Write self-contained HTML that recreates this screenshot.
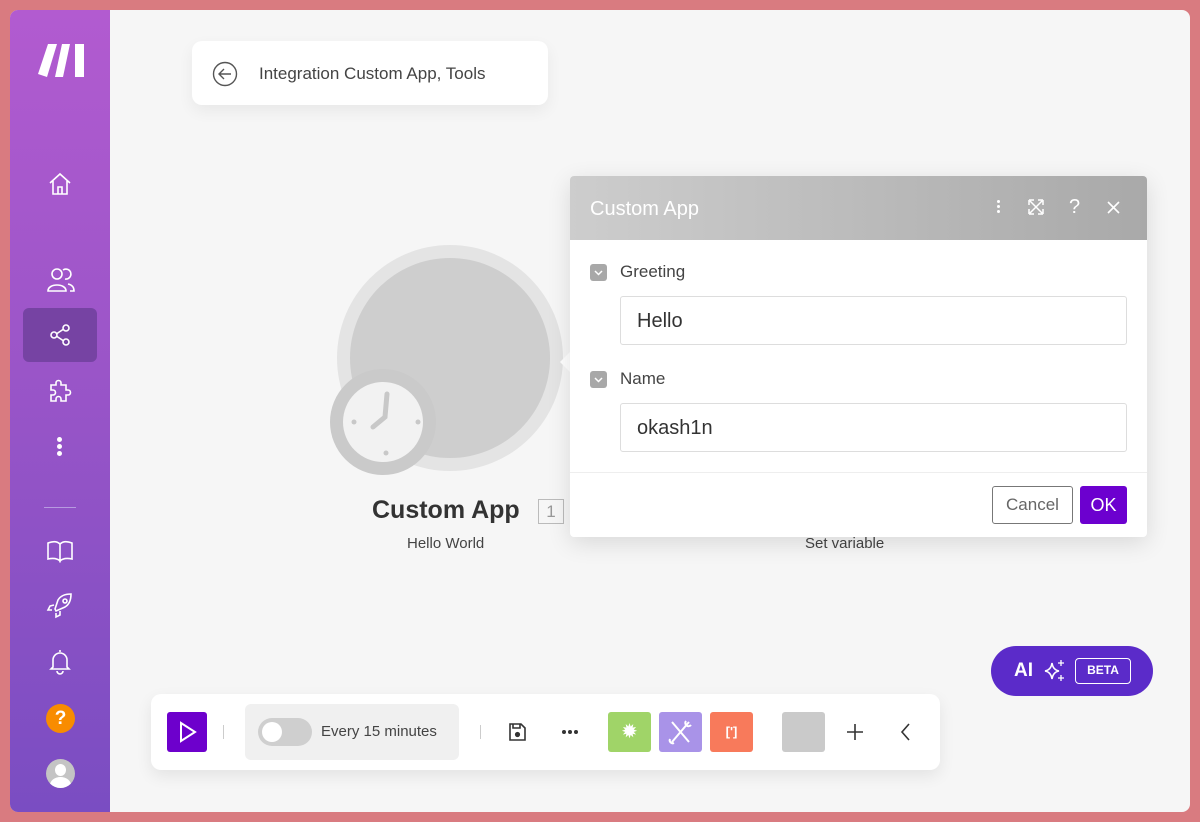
<!DOCTYPE html>
<html><head><meta charset="utf-8"><style>
*{margin:0;padding:0;box-sizing:border-box}
body{width:1200px;height:822px;background:#d97b80;font-family:"Liberation Sans",sans-serif;position:relative;overflow:hidden}
.frame{position:absolute;left:10px;top:10px;width:1180px;height:802px;background:#f6f6f6;border-radius:8px;overflow:hidden}
.side{position:absolute;left:0;top:0;width:100px;height:802px;background:linear-gradient(180deg,#b25bd0 0%,#9a55c8 45%,#7a4dc2 100%)}
.abs{position:absolute}
.ic{position:absolute;left:36px}
</style></head><body>
<div class="frame">
 <div class="side">
  <svg class="abs" style="left:28px;top:32px" width="48" height="36" viewBox="0 0 48 36"><g fill="#fff"><polygon points="10,2 19,2 9,35 0,32"/><polygon points="24,2 32,2 25,35 17,35"/><polygon points="37,2 46,2 46,35 37,35"/></g></svg>
  <svg class="ic" style="top:160px" width="28" height="28" viewBox="0 0 28 28" fill="none" stroke="#fff" stroke-width="1.6"><path d="M4 13 L14 4 L24 13 M7 11 V24 H21 V11 M12 24 V17 H16 V24"/></svg>
  <svg class="ic" style="top:256px" width="30" height="28" viewBox="0 0 30 28" fill="none" stroke="#fff" stroke-width="1.6"><circle cx="11" cy="8" r="5"/><path d="M2 25 C2 17 20 17 20 25 Z"/><path d="M17 4 A5 5 0 1 1 19 13 M22 18 C27 19 28 22 28 25 H24"/></svg>
  <div class="abs" style="left:13px;top:298px;width:74px;height:54px;background:#7643a3;border-radius:6px"></div>
  <svg class="ic" style="top:311px" width="28" height="28" viewBox="0 0 28 28" fill="none" stroke="#fff" stroke-width="1.6"><circle cx="20" cy="7" r="3"/><circle cx="8" cy="14" r="3"/><circle cx="20" cy="21" r="3"/><path d="M11 12.5 L17 8.5 M11 15.5 L17 19.5"/></svg>
  <svg class="ic" style="top:367px" width="28" height="28" viewBox="0 0 28 28" fill="none" stroke="#fff" stroke-width="1.6"><path d="M5 8 H10 V6 A2.5 2.5 0 0 1 15 6 V8 H20 V13 H22 A2.5 2.5 0 0 1 22 18 H20 V24 H15 V22 A2.5 2.5 0 0 0 10 22 V24 H5 V18 H7 A2.5 2.5 0 0 0 7 13 H5 Z"/></svg>
  <div class="abs" style="left:47px;top:427px;width:5px;height:5px;border-radius:50%;background:#fff;box-shadow:0 7px 0 #fff,0 14px 0 #fff"></div>
  <div class="abs" style="left:34px;top:497px;width:32px;height:1px;background:#b79ae0"></div>
  <svg class="ic" style="top:527px" width="30" height="28" viewBox="0 0 30 28" fill="none" stroke="#fff" stroke-width="1.6"><path d="M2 6 C7 4 11 4 14 7 V24 C11 21 7 21 2 22 Z M26 6 C21 4 17 4 14 7 V24 C17 21 21 21 26 22 Z"/></svg>
  <svg class="ic" style="top:582px" width="28" height="28" viewBox="0 0 28 28" fill="none" stroke="#fff" stroke-width="1.6"><path d="M9 17 L12 8 C15 3 20 2 25 2 C25 7 24 12 19 15 L10 19 Z"/><circle cx="19" cy="9" r="2"/><path d="M8 13 L4 14 L2 18 L6 18 M14 19 L14 23 L10 25 L10 21"/></svg>
  <svg class="ic" style="top:637px" width="28" height="28" viewBox="0 0 28 28" fill="none" stroke="#fff" stroke-width="1.6"><path d="M14 3 V5 M7 20 V13 A7 7 0 0 1 21 13 V20 L23 22 H5 Z M11 24 A3 3 0 0 0 17 24"/></svg>
  <div class="abs" style="left:36px;top:694px;width:29px;height:29px;border-radius:50%;background:#f88c00;color:#fff;font-weight:bold;font-size:19px;text-align:center;line-height:29px">?</div>
  <div class="abs" style="left:36px;top:749px;width:29px;height:29px;border-radius:50%;background:#c4c4c4;overflow:hidden"><div class="abs" style="left:9px;top:5px;width:11px;height:12px;border-radius:50%;background:#fff"></div><div class="abs" style="left:4px;top:18px;width:21px;height:16px;border-radius:50%;background:#fff"></div></div>
 </div>

 <div class="abs" style="left:182px;top:31px;width:356px;height:64px;background:#fff;border-radius:10px;box-shadow:0 6px 16px rgba(0,0,0,.06)">
  <svg class="abs" style="left:19px;top:19px" width="28" height="28" viewBox="0 0 28 28" fill="none" stroke="#555" stroke-width="1.4"><circle cx="14" cy="14" r="11.5"/><path d="M20 14 H8 M13 9 L8 14 L13 19"/></svg>
  <div class="abs" style="left:67px;top:23px;font-size:17px;color:#444">Integration Custom App, Tools</div>
 </div>

 <div class="abs" style="left:327px;top:235px;width:226px;height:226px;border-radius:50%;background:#e4e4e4"></div>
 <div class="abs" style="left:340px;top:248px;width:200px;height:200px;border-radius:50%;background:#cecece"></div>
 <div class="abs" style="left:320px;top:359px;width:106px;height:106px;border-radius:50%;background:#cacaca"></div>
 <div class="abs" style="left:333px;top:372px;width:80px;height:80px;border-radius:50%;background:#f2f2f2"></div>
 <svg class="abs" style="left:333px;top:372px" width="80" height="80" viewBox="0 0 80 80"><g fill="#c8c8c8"><circle cx="11" cy="40" r="2.5"/><circle cx="75" cy="40" r="2.5"/><circle cx="43" cy="71" r="2.5"/></g><path d="M44 12 L42 35 L30 45" stroke="#c8c8c8" stroke-width="5" fill="none" stroke-linecap="round"/></svg>
 <div class="abs" style="left:362px;top:486px;font-size:25px;font-weight:bold;color:#333">Custom App</div>
 <div class="abs" style="left:528px;top:489px;width:26px;height:25px;border:1px solid #bbb;color:#999;font-size:17px;text-align:center;line-height:23px">1</div>
 <div class="abs" style="left:397px;top:525px;font-size:15px;color:#444">Hello World</div>
 <div class="abs" style="left:795px;top:525px;font-size:15px;color:#444">Set variable</div>

 <div class="abs" style="left:550px;top:340px;width:0;height:0;border-top:12px solid transparent;border-bottom:12px solid transparent;border-right:12px solid #fff"></div>
 <div class="abs" style="left:560px;top:166px;width:577px;height:361px;background:#fff;border-radius:4px;box-shadow:0 6px 24px rgba(0,0,0,.12);overflow:hidden">
  <div class="abs" style="left:0;top:0;width:577px;height:64px;background:linear-gradient(90deg,#cdcdcd,#a9a9a9)">
   <div class="abs" style="left:20px;top:22px;font-size:20px;color:#fff">Custom App</div>
   <div class="abs" style="left:427px;top:24px;width:3px;height:3px;background:#fff;border-radius:50%;box-shadow:0 5px 0 #fff,0 10px 0 #fff"></div>
   <svg class="abs" style="left:457px;top:22px" width="18" height="18" viewBox="0 0 18 18" fill="none" stroke="#fff" stroke-width="1.5"><path d="M2 2 H7 M2 2 V7 M16 2 H11 M16 2 V7 M2 16 H7 M2 16 V11 M16 16 H11 M16 16 V11 M3 3 L15 15 M15 3 L3 15"/></svg>
   <div class="abs" style="left:499px;top:20px;font-size:20px;color:#fff">?</div>
   <svg class="abs" style="left:537px;top:25px" width="13" height="13" viewBox="0 0 13 13" stroke="#fff" stroke-width="1.6"><path d="M1 1 L12 12 M12 1 L1 12"/></svg>
  </div>
  <div class="abs" style="left:20px;top:88px;width:17px;height:17px;background:#a8a8a8;border-radius:3px"><svg width="17" height="17" viewBox="0 0 17 17" fill="none" stroke="#fff" stroke-width="1.5"><path d="M5 7 L8.5 10.5 L12 7"/></svg></div>
  <div class="abs" style="left:50px;top:86px;font-size:17px;color:#444">Greeting</div>
  <div class="abs" style="left:50px;top:120px;width:507px;height:49px;border:1px solid #ddd;border-radius:3px;padding:13px 16px;font-size:20px;color:#333">Hello</div>
  <div class="abs" style="left:20px;top:195px;width:17px;height:17px;background:#a8a8a8;border-radius:3px"><svg width="17" height="17" viewBox="0 0 17 17" fill="none" stroke="#fff" stroke-width="1.5"><path d="M5 7 L8.5 10.5 L12 7"/></svg></div>
  <div class="abs" style="left:50px;top:193px;font-size:17px;color:#444">Name</div>
  <div class="abs" style="left:50px;top:227px;width:507px;height:49px;border:1px solid #ddd;border-radius:3px;padding:13px 16px;font-size:20px;color:#333">okash1n</div>
  <div class="abs" style="left:0;top:296px;width:577px;height:1px;background:#eee"></div>
  <div class="abs" style="left:422px;top:310px;width:81px;height:38px;border:1px solid #777;border-radius:3px;text-align:center;line-height:36px;font-size:17px;color:#666">Cancel</div>
  <div class="abs" style="left:510px;top:310px;width:47px;height:38px;background:#6c00cf;border-radius:3px;text-align:center;line-height:38px;font-size:18px;color:#fff">OK</div>
 </div>

 <div class="abs" style="left:981px;top:636px;width:162px;height:50px;background:#5b2bc9;border-radius:25px">
  <div class="abs" style="left:23px;top:14px;font-size:19px;color:#fff;font-weight:bold">AI</div>
  <svg class="abs" style="left:52px;top:13px" width="24" height="24" viewBox="0 0 24 24" fill="none" stroke="#fff" stroke-width="1.5"><path d="M9 4 Q10 11 16 12 Q10 13 9 20 Q8 13 2 12 Q8 11 9 4 Z"/><path d="M18 1 V7 M15 4 H21 M18 16 V22 M15 19 H21" stroke-width="1.3"/></svg>
  <div class="abs" style="left:84px;top:12px;width:56px;height:26px;border:1.5px solid #fff;border-radius:4px;color:#fff;font-size:12px;font-weight:bold;text-align:center;line-height:23px">BETA</div>
 </div>

 <div class="abs" style="left:141px;top:684px;width:789px;height:76px;background:#fff;border-radius:10px;box-shadow:0 6px 16px rgba(0,0,0,.08)">
  <div class="abs" style="left:16px;top:18px;width:40px;height:40px;background:#6d00cc;border-radius:3px"><svg width="40" height="40" viewBox="0 0 40 40" fill="none" stroke="#fff" stroke-width="2"><path d="M14 11 L28 20 L14 29 Z"/></svg></div>
  <div class="abs" style="left:72px;top:31px;width:1px;height:14px;background:#ccc"></div>
  <div class="abs" style="left:94px;top:10px;width:214px;height:56px;background:#f0f0f0;border-radius:6px">
   <div class="abs" style="left:13px;top:14px;width:54px;height:28px;background:#cfcfcf;border-radius:14px"><div class="abs" style="left:4px;top:4px;width:20px;height:20px;border-radius:50%;background:#fff"></div></div>
   <div class="abs" style="left:76px;top:19px;font-size:15px;color:#444">Every 15 minutes</div>
  </div>
  <div class="abs" style="left:329px;top:31px;width:1px;height:14px;background:#ccc"></div>
  <svg class="abs" style="left:356px;top:28px" width="20" height="20" viewBox="0 0 20 20" fill="none" stroke="#333" stroke-width="1.6"><path d="M3 2 H14 L18 6 V18 H3 Z M6 2 V6 H13 V2"/><circle cx="10.5" cy="12.5" r="1.8" fill="#333"/></svg>
  <div class="abs" style="left:411px;top:36px;width:4px;height:4px;border-radius:50%;background:#333;box-shadow:6px 0 0 #333,12px 0 0 #333"></div>
  <div class="abs" style="left:457px;top:18px;width:43px;height:40px;background:#a0d468;border-radius:3px;color:#fff;font-size:20px;text-align:center;line-height:40px">✹</div>
  <div class="abs" style="left:508px;top:18px;width:43px;height:40px;background:#a993e8;border-radius:3px"><svg width="43" height="40" viewBox="0 0 43 40" fill="none" stroke="#fff" stroke-width="2"><path d="M13 10 L30 30 M30 10 L13 30 M27 9 A3 3 0 0 0 32 13 M11 27 A3 3 0 0 0 15 31"/></svg></div>
  <div class="abs" style="left:559px;top:18px;width:43px;height:40px;background:#f87a5b;border-radius:3px;color:#fff;font-size:13px;font-weight:bold;text-align:center;line-height:40px">[']</div>
  <div class="abs" style="left:631px;top:18px;width:43px;height:40px;background:#cacaca;border-radius:3px"></div>
  <svg class="abs" style="left:694px;top:28px" width="20" height="20" viewBox="0 0 20 20" stroke="#333" stroke-width="1.6"><path d="M10 2 V18 M2 10 H18"/></svg>
  <svg class="abs" style="left:748px;top:28px" width="14" height="20" viewBox="0 0 14 20" fill="none" stroke="#333" stroke-width="1.6"><path d="M10 2 L3 10 L10 18"/></svg>
 </div>
</div>
</body></html>
